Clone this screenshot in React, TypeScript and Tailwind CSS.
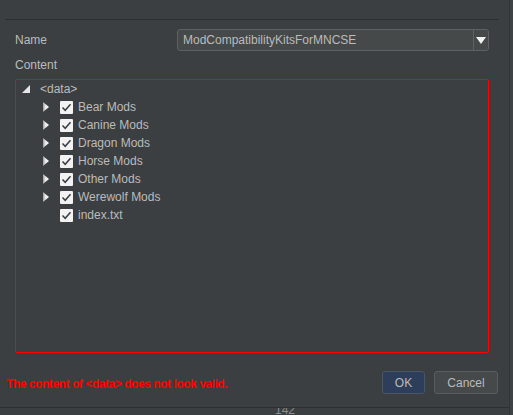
import React from 'react';

const items = ['Bear Mods', 'Canine Mods', 'Dragon Mods', 'Horse Mods', 'Other Mods', 'Werewolf Mods'];

const Check = () => (
  <span className="w-[13px] h-[13px] bg-[#f2f2f2] rounded-[1px] flex items-center justify-center shrink-0">
    <svg width="11" height="11" viewBox="0 0 11 11">
      <path d="M1.5 5.5 L4.2 8.3 L9.5 2.2" fill="none" stroke="#3a3d3f" strokeWidth="1.5" />
    </svg>
  </span>
);

const Collapsed = () => (
  <svg width="8" height="10" viewBox="0 0 8 10" className="shrink-0">
    <defs>
      <linearGradient id="cg" x1="0" x2="1" y1="0" y2="0">
        <stop offset="0" stopColor="#9a9a9a" />
        <stop offset="0.4" stopColor="#e8e8e8" />
        <stop offset="1" stopColor="#ffffff" />
      </linearGradient>
    </defs>
    <polygon points="1,0 7,5 1,10" fill="url(#cg)" />
  </svg>
);

const Expanded = () => (
  <svg width="10" height="10" viewBox="0 0 10 10" className="shrink-0">
    <polygon points="9,1 9,9 1,9" fill="#e6e6e6" />
  </svg>
);

const TreeRow = ({ label, leaf }: { label: string; leaf?: boolean }) => (
  <div className="h-[18px] flex items-center pl-[26px]">
    <span className="w-[18px] flex items-center shrink-0">{!leaf && <Collapsed />}</span>
    <Check />
    <span className="ml-[5px]">{label}</span>
  </div>
);

export default function App() {
  return (
    <div
      className="w-[513px] h-[415px] bg-[#3c3f41] flex text-[12px] text-[#bbbbbb] overflow-hidden"
      style={{ fontFamily: '"Liberation Sans", Arial, sans-serif' }}
    >
      <div className="w-[510px] flex flex-col border-r border-[#323436]">
        <div className="h-[20px] ml-[5px] mr-[10px] border-b border-[#2d2f30] shrink-0" />

        <div className="pl-[15px] pr-[20px] flex flex-col">
          <div className="mt-[9px] flex items-center h-[22px]">
            <span className="w-[162px]">Name</span>
            <div className="flex-1 h-[22px] flex border border-[#5e6163] bg-[#45494a] rounded-[3px]">
              <span className="flex-1 pl-[5px] leading-[20px]">ModCompatibilityKitsForMNCSE</span>
              <span className="w-[15px] border-l border-[#5e6163] flex items-center justify-center">
                <svg width="10" height="7" viewBox="0 0 10 7">
                  <polygon points="0,0 10,0 5,7" fill="#f2f2f2" />
                </svg>
              </span>
            </div>
          </div>

          <div className="mt-[6px] h-[16px] leading-[16px]">Content</div>

          <div className="mt-[6px] h-[274px] border border-[#ff0000] rounded-[2px]">
            <div className="h-[18px] flex items-center pl-[5px]">
              <span className="w-[19px] flex items-center shrink-0">
                <Expanded />
              </span>
              <span>&lt;data&gt;</span>
            </div>
            {items.map((it) => (
              <TreeRow key={it} label={it} />
            ))}
            <TreeRow label="index.txt" leaf />
          </div>
        </div>

        <div className="flex items-center mt-[18px] pl-[6px] pr-[11px] h-[23px]">
          <span className="flex-1 text-[#ff0000] font-bold tracking-[-0.45px] pt-[2px]">
            The content of &lt;data&gt; does not look valid.
          </span>
          <button className="w-[43px] h-[23px] rounded-[3px] border border-[#4a5566] bg-[#2c3e5a] text-[#bbbbbb]">
            OK
          </button>
          <button className="ml-[9px] w-[64px] h-[23px] rounded-[3px] border border-[#5a5d5f] bg-[#45494a] text-[#bbbbbb]">
            Cancel
          </button>
        </div>

        <div className="mt-[13px] border-b border-[#2d2f30]" />
        <div className="flex-1 overflow-hidden flex pl-[275px]">
          <span className="leading-[12px] mt-[-4px] text-[#8a8d90]">142</span>
        </div>
      </div>
      <div className="flex-1 bg-[#3f4244]" />
    </div>
  );
}
